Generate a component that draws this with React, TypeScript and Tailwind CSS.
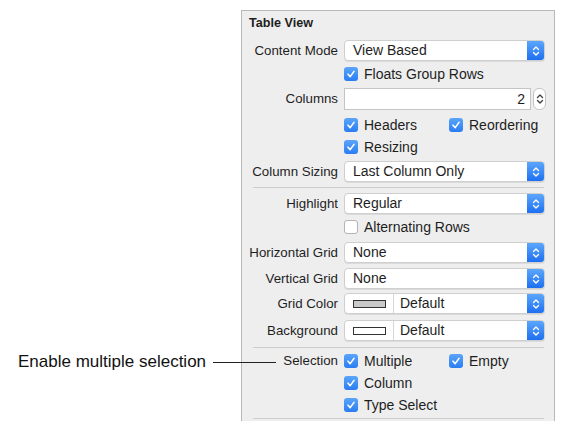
import type { ReactNode } from 'react'

const font = { fontFamily: '"Liberation Sans", Arial, sans-serif' }

function Chevrons({ color = 'white' }: { color?: string }) {
  return (
    <svg width="8" height="12" viewBox="0 0 8 12" fill="none" stroke={color} strokeWidth="1.4" strokeLinecap="round" strokeLinejoin="round">
      <path d="M1.5 4.5 L4 2 L6.5 4.5" />
      <path d="M1.5 7.5 L4 10 L6.5 7.5" />
    </svg>
  )
}

function Check({ checked = true, label }: { checked?: boolean; label: string }) {
  return (
    <div className="flex items-center gap-[6px]">
      {checked ? (
        <div className="w-[14px] h-[14px] rounded-[3px] bg-gradient-to-b from-[#5aa5fa] to-[#2a7cf2] flex items-center justify-center">
          <svg width="10" height="10" viewBox="0 0 10 10" fill="none" stroke="white" strokeWidth="1.6" strokeLinecap="round" strokeLinejoin="round">
            <path d="M2 5.2 L4.2 7.6 L8 2.4" />
          </svg>
        </div>
      ) : (
        <div className="w-[14px] h-[14px] rounded-[3px] bg-white border border-[#b4b4b4]" />
      )}
      <span className="text-[14px] text-[#1e1e1e]">{label}</span>
    </div>
  )
}

function Popup({ value, swatch }: { value: string; swatch?: 'gray' | 'white' }) {
  return (
    <div className="w-[201px] h-[21px] flex rounded-[4px] bg-white border border-[#cfcfcf] shadow-[0_1px_0_rgba(0,0,0,0.08)] overflow-hidden">
      {swatch && (
        <div className="w-[49px] flex items-center justify-center border-r border-[#d6d6d6]">
          <div className={`w-[33px] h-[8px] border border-[#333] ${swatch === 'gray' ? 'bg-[#c9c9c9]' : 'bg-white'}`} />
        </div>
      )}
      <div className={`flex-1 flex items-center text-[14px] text-[#1e1e1e] ${swatch ? 'pl-[6px]' : 'pl-[8px]'}`}>{value}</div>
      <div className="w-[17px] bg-gradient-to-b from-[#5ba6fb] to-[#1c6ff0] flex items-center justify-center">
        <Chevrons />
      </div>
    </div>
  )
}

function Row({ label, h, mt, children }: { label?: string; h: number; mt: number; children: ReactNode }) {
  return (
    <div className="flex items-center" style={{ height: h, marginTop: mt }}>
      <div className="w-[96px] text-right text-[13.3px] text-[#1e1e1e] whitespace-nowrap">{label}</div>
      <div className="ml-[6px] flex items-center">{children}</div>
    </div>
  )
}

function Sep({ mt }: { mt: number }) {
  return <div className="ml-[11px] mr-[10px] h-px bg-[#cdcdcd]" style={{ marginTop: mt }} />
}

export default function App() {
  return (
    <div className="w-[566px] h-[430px] bg-white relative overflow-hidden" style={font}>
      <div className="ml-[241px] mt-[10px] w-[314px] h-[411px] bg-[#eeeeee] border-l border-t border-r border-[#b9b9b9]">
        <div className="h-[24px] flex items-center pl-[7px] text-[12.6px] font-bold text-[#1e1e1e]">Table View</div>

        <Row label="Content Mode" h={21} mt={5}>
          <Popup value="View Based" />
        </Row>
        <Row h={22} mt={2}>
          <Check label="Floats Group Rows" />
        </Row>
        <Row label="Columns" h={22} mt={3}>
          <div className="w-[187px] h-[22px] bg-white border border-[#c4c4c4] flex items-center justify-end pr-[5px] text-[14px] text-[#1e1e1e]">2</div>
          <div className="ml-[2px] w-[13px] h-[22px] rounded-[6px] bg-white border border-[#c4c4c4] flex items-center justify-center">
            <Chevrons color="#444" />
          </div>
        </Row>
        <Row h={22} mt={4}>
          <div className="w-[105px]">
            <Check label="Headers" />
          </div>
          <Check label="Reordering" />
        </Row>
        <Row h={22} mt={0}>
          <Check label="Resizing" />
        </Row>
        <Row label="Column Sizing" h={21} mt={3}>
          <Popup value="Last Column Only" />
        </Row>
        <Sep mt={5} />
        <Row label="Highlight" h={21} mt={5}>
          <Popup value="Regular" />
        </Row>
        <Row h={22} mt={2}>
          <Check checked={false} label="Alternating Rows" />
        </Row>
        <Row label="Horizontal Grid" h={21} mt={4}>
          <Popup value="None" />
        </Row>
        <Row label="Vertical Grid" h={21} mt={5}>
          <Popup value="None" />
        </Row>
        <Row label="Grid Color" h={21} mt={4}>
          <Popup value="Default" swatch="gray" />
        </Row>
        <Row label="Background" h={21} mt={6}>
          <Popup value="Default" swatch="white" />
        </Row>
        <Sep mt={6} />
        <Row label="Selection" h={22} mt={2}>
          <div className="w-[105px]">
            <Check label="Multiple" />
          </div>
          <Check label="Empty" />
        </Row>
        <Row h={22} mt={0}>
          <Check label="Column" />
        </Row>
        <Row h={22} mt={0}>
          <Check label="Type Select" />
        </Row>
        <Sep mt={2} />
      </div>

      {/* callout over the panel edge */}
      <div className="absolute left-[18px] top-[351px] flex items-center">
        <span className="text-[17px] text-[#111] leading-[22px]">Enable multiple selection</span>
        <div className="ml-[7px] w-[63px] h-px bg-[#222]" />
      </div>
    </div>
  )
}
